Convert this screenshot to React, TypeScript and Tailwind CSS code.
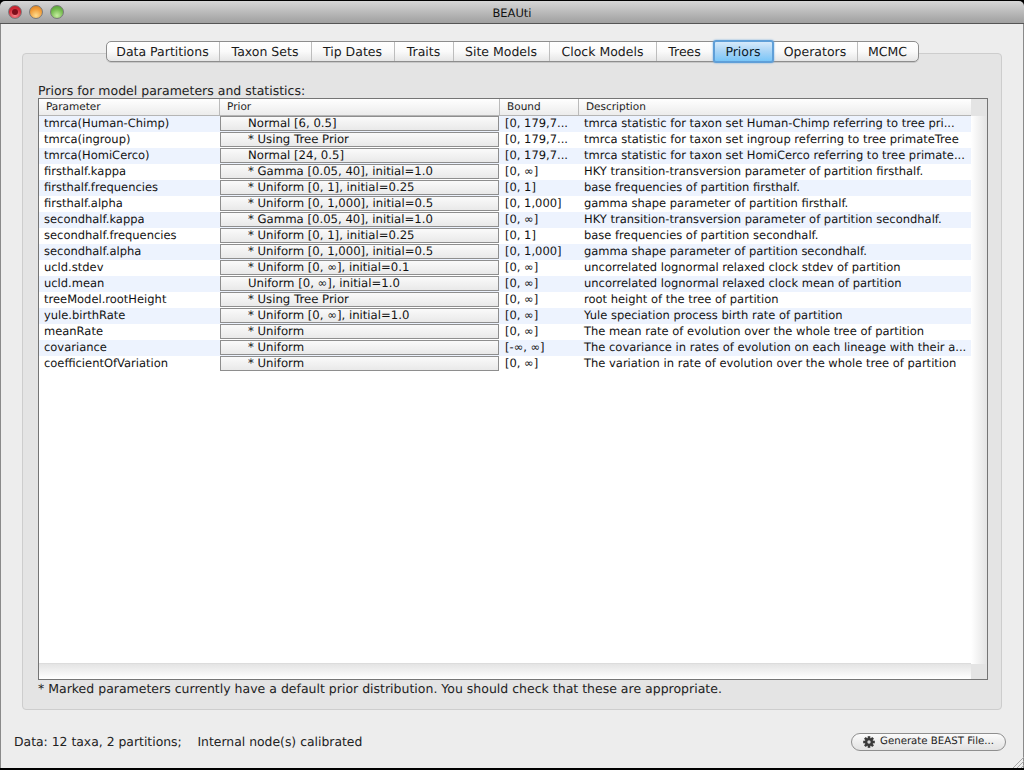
import React from "react";

const font = { fontFamily: '"DejaVu Sans", sans-serif', textRendering: "geometricPrecision" as const };

const tabs: [string, number][] = [
  ["Data Partitions", 113],
  ["Taxon Sets", 92],
  ["Tip Dates", 83],
  ["Traits", 59],
  ["Site Models", 96],
  ["Clock Models", 107],
  ["Trees", 56],
  ["Priors", 61],
  ["Operators", 84],
  ["MCMC", 60],
];

const rows: [string, string, string, string][] = [
  ["tmrca(Human-Chimp)", "Normal [6, 0.5]", "[0, 179,7...", "tmrca statistic for taxon set Human-Chimp referring to tree pri..."],
  ["tmrca(ingroup)", "* Using Tree Prior", "[0, 179,7...", "tmrca statistic for taxon set ingroup referring to tree primateTree"],
  ["tmrca(HomiCerco)", "Normal [24, 0.5]", "[0, 179,7...", "tmrca statistic for taxon set HomiCerco referring to tree primate..."],
  ["firsthalf.kappa", "* Gamma [0.05, 40], initial=1.0", "[0, ∞]", "HKY transition-transversion parameter of partition firsthalf."],
  ["firsthalf.frequencies", "* Uniform [0, 1], initial=0.25", "[0, 1]", "base frequencies of partition firsthalf."],
  ["firsthalf.alpha", "* Uniform [0, 1,000], initial=0.5", "[0, 1,000]", "gamma shape parameter of partition firsthalf."],
  ["secondhalf.kappa", "* Gamma [0.05, 40], initial=1.0", "[0, ∞]", "HKY transition-transversion parameter of partition secondhalf."],
  ["secondhalf.frequencies", "* Uniform [0, 1], initial=0.25", "[0, 1]", "base frequencies of partition secondhalf."],
  ["secondhalf.alpha", "* Uniform [0, 1,000], initial=0.5", "[0, 1,000]", "gamma shape parameter of partition secondhalf."],
  ["ucld.stdev", "* Uniform [0, ∞], initial=0.1", "[0, ∞]", "uncorrelated lognormal relaxed clock stdev of partition"],
  ["ucld.mean", "Uniform [0, ∞], initial=1.0", "[0, ∞]", "uncorrelated lognormal relaxed clock mean of partition"],
  ["treeModel.rootHeight", "* Using Tree Prior", "[0, ∞]", "root height of the tree of partition"],
  ["yule.birthRate", "* Uniform [0, ∞], initial=1.0", "[0, ∞]", "Yule speciation process birth rate of partition"],
  ["meanRate", "* Uniform", "[0, ∞]", "The mean rate of evolution over the whole tree of partition"],
  ["covariance", "* Uniform", "[-∞, ∞]", "The covariance in rates of evolution on each lineage with their a..."],
  ["coefficientOfVariation", "* Uniform", "[0, ∞]", "The variation in rate of evolution over the whole tree of partition"],
];

function Gear() {
  return (
    <svg width="12" height="12" viewBox="0 0 12 12" className="shrink-0">
      <g fill="#3a3a3a">
        <circle cx="6" cy="6" r="4" />
        {[0, 45, 90, 135].map((a) => (
          <rect key={a} x="4.7" y="0.2" width="2.6" height="11.6" transform={`rotate(${a} 6 6)`} />
        ))}
      </g>
      <circle cx="6" cy="6" r="1.7" fill="#d8d8d8" />
    </svg>
  );
}

function Light({ c, dot }: { c: string; dot?: boolean }) {
  return (
    <div
      className="w-[14px] h-[14px] rounded-full border border-[#7a7a7a] flex items-center justify-center"
      style={{ background: c }}
    >
      {dot && <div className="w-[6px] h-[6px] rounded-full bg-[#7d0f1a]" />}
    </div>
  );
}

function Grip() {
  return (
    <svg width="12" height="12" viewBox="0 0 12 12" className="absolute right-0 bottom-[2px]">
      <g stroke="#a8a8a8" strokeWidth="1">
        <line x1="1" y1="12" x2="12" y2="1" />
        <line x1="5" y1="12" x2="12" y2="5" />
        <line x1="9" y1="12" x2="12" y2="9" />
      </g>
    </svg>
  );
}

export default function App() {
  return (
    <div
      style={font}
      className="relative w-[1024px] h-[770px] overflow-hidden text-[11.5px] leading-[16px] text-[#111] flex flex-col bg-black"
    >
      <div className="h-[23px] shrink-0 border-b border-b-[#555] mt-[1px] bg-gradient-to-b from-[#d6d6d6] to-[#a0a0a0] relative flex items-center justify-center rounded-t-[5px]">
        <div className="absolute left-[8px] top-[4px] flex gap-[7px]">
          <Light dot c="radial-gradient(circle at 50% 75%, #f78a8f, #d22a36 60%, #b81c28)" />
          <Light c="radial-gradient(circle at 50% 80%, #ffdc8e, #f09a35 60%, #d27a1c)" />
          <Light c="radial-gradient(circle at 50% 80%, #c6eea0, #70b84a 60%, #4f9a30)" />
        </div>
        <span className="text-[11.5px] text-[#111] pt-[1px]">BEAUti</span>
      </div>

      <div className="flex-1 min-h-0 flex flex-col bg-[#ededed] border-x border-[#8a8a8a] pl-[21px] pr-[21px] pt-[17px] mb-[2px]">
        <div className="relative z-10 flex justify-center h-[22px] shrink-0 pr-[1px] pl-[1px]">
          <div className="flex h-[21px] rounded-[5px] border border-[#8d8d8d] bg-gradient-to-b from-white via-[#fafafa] to-[#e6e6e6] shadow-[0_1px_0_#c8c8c8]">
            {tabs.map(([t, w], i) => {
              const sel = t === "Priors";
              return (
                <div
                  key={t}
                  style={{ width: w }}
                  className={
                    sel
                      ? "-my-[2px] h-[23px] text-[12.5px] leading-[19px] text-center rounded-[3px] border-2 border-[#5f9fd8] bg-gradient-to-b from-[#d6eafb] via-[#a8d4f6] to-[#78c6f8] shadow-[0_0_2px_#6ba6dc] text-[#0a1a2a]"
                      : "text-[12.5px] leading-[19px] text-center text-[#1a1a1a] " +
                        (i < tabs.length - 1 && tabs[i + 1][0] !== "Priors" ? "border-r border-[#bdbdbd]" : "")
                  }
                >
                  {t}
                </div>
              );
            })}
          </div>
        </div>

        <div className="-mt-[10px] h-[657px] shrink-0 rounded-[4px] border border-[#cdcdcd] bg-[#e4e4e4] pl-[15px] pr-[14px] pt-[28px] flex flex-col">
          <div className="h-[16px] text-[12.5px] leading-[17px] text-[#222]">Priors for model parameters and statistics:</div>
          <div className="h-[582px] w-[950px] shrink-0 border border-[#757575] bg-white flex flex-col">
            <div className="flex h-[17px] shrink-0 text-[10.5px] leading-[17px] text-[#222]">
              <div className="w-[932px] flex border-b border-[#b5b5b5] bg-gradient-to-b from-white to-[#ececec]">
                <div className="w-[181px] pl-[7px] border-r border-[#bbb]">Parameter</div>
                <div className="w-[280px] pl-[7px] border-r border-[#bbb]">Prior</div>
                <div className="w-[79px] pl-[7px] border-r border-[#bbb]">Bound</div>
                <div className="w-[392px] pl-[7px]">Description</div>
              </div>
              <div className="flex-1 bg-[#e4e4e4]" />
            </div>
            <div className="flex flex-1 min-h-0">
              <div className="flex-1 min-w-0 flex flex-col">
                {rows.map(([p, pr, b, d], i) => {
                  const stripe = i % 2 === 0 ? "bg-[#edf3fe]" : "bg-white";
                  return (
                    <div key={p} className="flex h-[16px] shrink-0 text-[11.5px] leading-[15px] whitespace-nowrap">
                      <div className={"w-[181px] pl-[5px] " + stripe}>{p}</div>
                      <div className={"w-[280px] " + stripe}>
                        <div className="h-[15px] mr-[1px] border border-[#8e8e8e] bg-gradient-to-b from-[#fafafa] to-[#e9e9e9] pl-[27px] text-[11.7px] leading-[13px]">
                          {pr}
                        </div>
                      </div>
                      <div className={"w-[79px] pl-[5px] " + stripe}>{b}</div>
                      <div className={"w-[392px] pl-[5px] overflow-hidden " + stripe}>{d}</div>
                    </div>
                  );
                })}
                <div className="flex-1 border-b border-[#dcdcdc]" />
                <div className="h-[15px] shrink-0 bg-gradient-to-b from-[#e4e4e4] to-white" />
              </div>
              <div className="w-[16px] shrink-0 flex flex-col">
                <div className="flex-1 bg-gradient-to-r from-white to-[#e4e4e4]" />
                <div className="h-[15px] bg-[#e4e4e4]" />
              </div>
            </div>
          </div>
          <div className="h-[18px] text-[12.5px] leading-[18px] text-[#222]">
            * Marked parameters currently have a default prior distribution. You should check that these are appropriate.
          </div>
        </div>

        <div className="flex items-center justify-between mt-[21px] -ml-[8px] -mr-[4px] h-[20px]">
          <div className="text-[12.4px] leading-[21px] whitespace-pre text-[#222]">Data: 12 taxa, 2 partitions;    Internal node(s) calibrated</div>
          <div className="w-[155px] h-[18px] mt-[1px] rounded-full border border-[#8f8f8f] bg-gradient-to-b from-[#fbfbfb] to-[#e2e2e2] flex items-center justify-center gap-[5px] text-[10.2px] text-[#222]">
            <Gear />
            Generate BEAST File...
          </div>
        </div>
        <Grip />
      </div>
    </div>
  );
}
